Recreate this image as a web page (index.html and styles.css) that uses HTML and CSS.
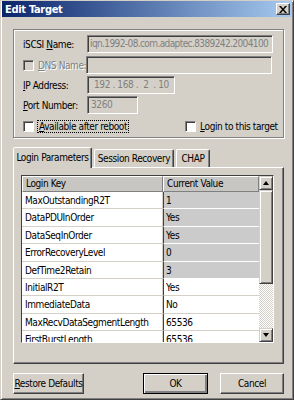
FILE: index.html
```html
<!DOCTYPE html>
<html lang="en">

<head>
    <meta charset="UTF-8">
    <title>Edit Target</title>
    <link rel="stylesheet" href="styles.css">
</head>

<body>
    <div class="window">
        <div class="titlebar">
            <span class="title">Edit Target</span>
            <span class="close-btn">
                <svg width="8" height="7" viewBox="0 0 8 7"><path d="M0 0h2l2 2.5L6 0h2L5 3.5 8 7H6L4 4.5 2 7H0l3-3.5z" fill="#000"/></svg>
            </span>
        </div>

        <div class="group">
            <div class="row first">
                <label class="lbl">iSCSI <u>N</u>ame:</label>
                <div class="edit wide iqn">iqn.1992-08.com.adaptec.8389242.2004100</div>
            </div>
            <div class="row">
                <span class="check disabled"></span>
                <label class="lbl short disabled"><u>D</u>NS Name:</label>
                <div class="edit wide"></div>
            </div>
            <div class="row">
                <label class="lbl"><u>I</u>P Address:</label>
                <div class="edit ip">192 . 168 .&nbsp; 2&nbsp; . 10</div>
            </div>
            <div class="row">
                <label class="lbl"><u>P</u>ort Number:</label>
                <div class="edit port">3260</div>
            </div>
            <div class="checks">
                <div class="checkitem">
                    <span class="check"></span>
                    <span class="focus"><u>A</u>vailable after reboot</span>
                </div>
                <div class="checkitem login">
                    <span class="check"></span>
                    <span><u>L</u>ogin to this target</span>
                </div>
            </div>
        </div>

        <div class="tabs">
            <div class="tab active">Login Parameters</div>
            <div class="tab">Session Recovery</div>
            <div class="tab">CHAP</div>
        </div>

        <div class="panel">
            <div class="list">
                <div class="list-main">
                    <div class="list-head">
                        <div class="hcell key">Login Key</div>
                        <div class="hcell val">Current Value</div>
                    </div>
                    <div class="list-body" id="listBody"></div>
                </div>
                <div class="scrollbar">
                    <div class="sbtn"><span class="arrow up"></span></div>
                    <div class="thumb"></div>
                    <div class="track"></div>
                    <div class="sbtn"><span class="arrow down"></span></div>
                </div>
            </div>
        </div>

        <div class="buttons">
            <button class="btn restore"><u>R</u>estore Defaults</button>
            <button class="btn ok">OK</button>
            <button class="btn cancel">Cancel</button>
        </div>
    </div>

    <script>
        let params = [
            { key: "MaxOutstandingR2T", value: "1", locked: true },
            { key: "DataPDUInOrder", value: "Yes", locked: true },
            { key: "DataSeqInOrder", value: "Yes", locked: true },
            { key: "ErrorRecoveryLevel", value: "0", locked: true },
            { key: "DefTime2Retain", value: "3", locked: true },
            { key: "InitialR2T", value: "Yes", locked: false },
            { key: "ImmediateData", value: "No", locked: false },
            { key: "MaxRecvDataSegmentLength", value: "65536", locked: false },
            { key: "FirstBurstLength", value: "65536", locked: false }
        ];

        let listBody = document.getElementById('listBody');
        params.forEach((p) => {
            let row = document.createElement('div');
            row.className = "lrow";
            row.innerHTML = `
                <div class="cell key">${p.key}</div>
                <div class="cell val ${p.locked ? 'locked' : ''}">${p.value}</div>
            `;
            listBody.appendChild(row);
        });
    </script>
</body>

</html>
```

FILE: styles.css
```css
body {
    margin: 0;
    font-family: "DejaVu Sans Condensed", "DejaVu Sans", sans-serif;
    font-size: 10px;
    letter-spacing: -0.4px;
    color: #000;
    white-space: nowrap;
}

.window {
    width: 294px;
    height: 400px;
    box-sizing: border-box;
    background-color: #d4d0c8;
    border: 1px solid;
    border-color: #d4d0c8 #404040 #404040 #d4d0c8;
    box-shadow: inset 1px 1px #fff, inset -1px -1px #808080;
    padding: 0 1px;
    overflow: hidden;
}

.titlebar {
    height: 16px;
    display: flex;
    align-items: center;
    justify-content: space-between;
    padding: 0 2px 0 3px;
    background: linear-gradient(to right, #0a246a, #a6caf0);
}

.title {
    color: #fff;
    font-weight: bold;
    font-size: 11px;
    letter-spacing: -0.3px;
}

.close-btn {
    width: 14px;
    height: 12px;
    box-sizing: border-box;
    display: flex;
    align-items: center;
    justify-content: center;
    background-color: #d4d0c8;
    border: 1px solid;
    border-color: #fff #404040 #404040 #fff;
    box-shadow: inset -1px -1px #808080;
}

/* target group */

.group {
    width: 271px;
    height: 109px;
    box-sizing: border-box;
    margin: 12px 0 0 11px;
    padding: 5px 0 0 9px;
    border: 1px solid #808080;
    box-shadow: inset 1px 1px #fff, 1px 1px #fff;
}

.row {
    display: flex;
    align-items: center;
    height: 18px;
    width: 249px;
}

.row + .row {
    margin-top: 2px;
}

.row.first + .row {
    margin-top: 3px;
}

.lbl {
    width: 64px;
    flex-shrink: 0;
}

.lbl.short {
    width: auto;
}

.row .edit {
    flex-shrink: 0;
}

.row .check + .lbl + .edit {
    margin-left: auto;
}

.disabled {
    color: #808080;
    text-shadow: 1px 1px #fff;
}

.edit {
    height: 18px;
    box-sizing: border-box;
    border: 1px solid;
    border-color: #808080 #fff #fff #808080;
    box-shadow: inset 1px 1px #404040, inset -1px -1px #d4d0c8;
    color: #808080;
    padding: 2px 3px;
    overflow: hidden;
}

.wide {
    width: 186px;
}

.iqn {
    padding-left: 2px;
    letter-spacing: -0.6px;
}

.ip {
    width: 88px;
    padding-left: 6px;
}

.port {
    width: 51px;
}

.check {
    display: inline-block;
    width: 11px;
    height: 11px;
    box-sizing: border-box;
    background-color: #fff;
    border: 1px solid;
    border-color: #808080 #fff #fff #808080;
    box-shadow: inset 1px 1px #404040;
    margin-right: 4px;
    flex-shrink: 0;
}

.check.disabled {
    background-color: #d4d0c8;
}

.checks {
    display: flex;
    margin-top: 6px;
    height: 13px;
    align-items: center;
}

.checkitem {
    display: flex;
    align-items: center;
}

.checkitem.login {
    margin-left: 57px;
}

.focus {
    outline: 1px dotted #000;
    padding: 0 1px;
}

/* tabs */

.tabs {
    display: flex;
    align-items: flex-end;
    margin: 9px 0 0 11px;
    height: 20px;
    position: relative;
    z-index: 1;
}

.tab {
    height: 18px;
    box-sizing: border-box;
    padding-top: 3px;
    text-align: center;
    border: 1px solid;
    border-bottom: none;
    border-color: #fff #404040 transparent #fff;
    box-shadow: inset -1px 0 #808080;
    border-radius: 2px 2px 0 0;
    margin-right: 2px;
}

.tab:nth-child(2) {
    width: 80px;
}

.tab:nth-child(3) {
    width: 34px;
}

.tab.active {
    height: 21px;
    width: 79px;
    padding-top: 4px;
    margin-bottom: -1px;
    background-color: #d4d0c8;
}

.panel {
    width: 271px;
    height: 197px;
    box-sizing: border-box;
    margin-left: 11px;
    border: 1px solid;
    border-color: #fff #404040 #404040 #fff;
    box-shadow: inset -1px -1px #808080;
    padding: 7px 0 0 7px;
}

/* list view */

.list {
    width: 253px;
    height: 168px;
    box-sizing: border-box;
    display: flex;
    border: 1px solid;
    border-color: #404040 #fff #fff #404040;
    background-color: #fff;
}

.list-main {
    width: 237px;
    overflow: hidden;
}

.list-head {
    display: flex;
    height: 16px;
}

.hcell {
    height: 16px;
    box-sizing: border-box;
    background-color: #c8c6c2;
    border: 1px solid;
    border-color: #fff #808080 #808080 #fff;
    padding: 1px 3px;
}

.key {
    width: 141px;
}

.val {
    width: 96px;
}

.lrow {
    display: flex;
    height: 17.4px;
}

.cell {
    box-sizing: border-box;
    padding: 3px 3px 0;
    border-bottom: 1px solid #d4d0c8;
}

.cell.key {
    border-right: 1px solid #d4d0c8;
}

.cell.val {
    border-left: 1px solid #404040;
    padding-left: 2px;
}

.cell.val.locked {
    background-color: #cbcbcb;
    border-bottom-color: #fff;
}

.scrollbar {
    width: 14px;
    display: flex;
    flex-direction: column;
}

.sbtn,
.thumb {
    box-sizing: border-box;
    background-color: #d4d0c8;
    border: 1px solid;
    border-color: #d4d0c8 #404040 #404040 #d4d0c8;
    box-shadow: inset 1px 1px #fff, inset -1px -1px #808080;
}

.sbtn {
    height: 14px;
    display: flex;
    align-items: center;
    justify-content: center;
}

.thumb {
    height: 94px;
}

.track {
    flex: 1;
    background: repeating-conic-gradient(#d4d0c8 0 25%, #fff 0 50%) 0 0 / 2px 2px;
}

.arrow {
    width: 0;
    height: 0;
    border-left: 3px solid transparent;
    border-right: 3px solid transparent;
}

.arrow.up {
    border-bottom: 4px solid #000;
}

.arrow.down {
    border-top: 4px solid #000;
}

/* bottom buttons */

.buttons {
    display: flex;
    margin: 9px 0 0 11px;
}

.btn {
    height: 21px;
    box-sizing: border-box;
    font-family: inherit;
    font-size: 10px;
    letter-spacing: inherit;
    color: #000;
    background-color: #d4d0c8;
    border: 1px solid;
    border-color: #fff #404040 #404040 #fff;
    box-shadow: inset -1px -1px #808080;
    padding: 0;
}

.restore {
    width: 71px;
}

.ok {
    width: 65px;
    margin-left: 59px;
    border-color: #000;
    box-shadow: inset 1px 1px #fff, inset -2px -2px #808080;
}

.cancel {
    width: 64px;
    margin-left: 12px;
}
```
